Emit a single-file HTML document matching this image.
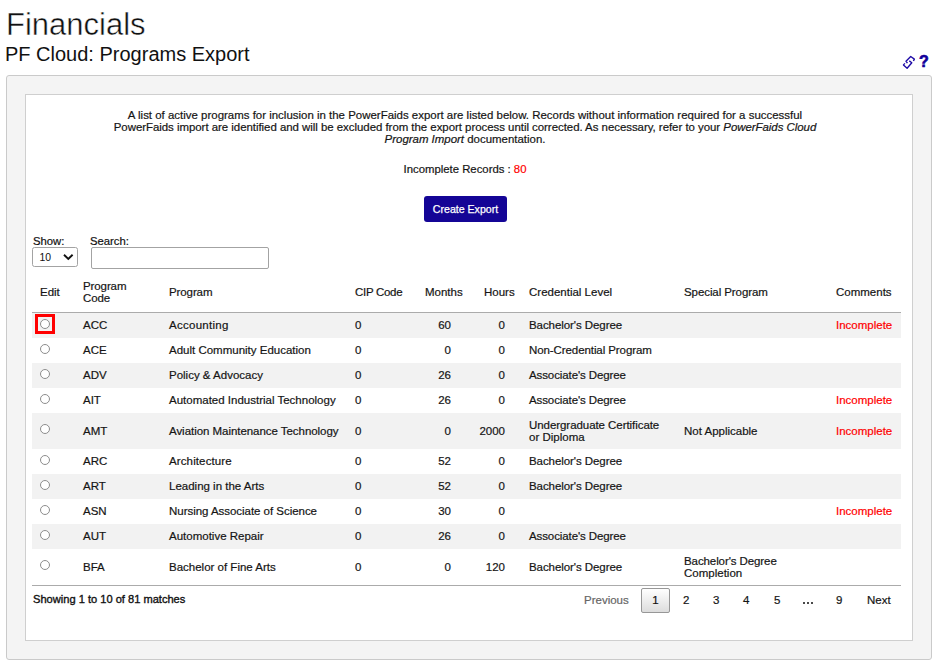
<!DOCTYPE html>
<html><head><meta charset="utf-8">
<style>
*{box-sizing:border-box}
html,body{margin:0;padding:0;background:#fff;width:936px;height:665px;overflow:hidden;position:relative}
body{font-family:"Liberation Sans",sans-serif;color:#111;font-size:11.5px}
.tb td,.tb th,#intro,#rec,#show,#search,#info,.pg{-webkit-text-stroke:0.2px currentColor}
.a{position:absolute;white-space:nowrap}
#h1{left:6px;top:8px;font-size:31px;line-height:34px;color:#111;-webkit-text-stroke:0.45px #fff}
#h2{left:5px;top:43px;font-size:20px;line-height:22px;color:#111}
#outer{left:6px;top:75px;width:926px;height:585px;border:1px solid #cacaca;border-radius:3px;background:#f4f4f4}
#inner{left:25px;top:94px;width:888px;height:547px;border:1px solid #cfcfcf;background:#fff}
#intro{left:0;width:930px;top:109px;text-align:center;font-size:11.45px;line-height:12px;color:#151515}
#rec{left:0;width:930px;top:163px;text-align:center;color:#151515;font-size:11.35px}
#rec span{color:#ff0000}
#btn{left:424px;top:196px;width:83px;height:26px;background:#140596;border-radius:3px;color:#fff;text-align:center;line-height:26px;font-size:10.6px;-webkit-text-stroke:0.25px #fff}
#show{left:33px;top:235px;font-size:11.3px}
#search{left:90px;top:235px;font-size:11.3px}
#sel{left:32px;top:247px;width:46px;height:20px;border:1px solid #a3a3a3;border-radius:2.5px;background:#fff}
#sel span{position:absolute;left:6.5px;top:4px;font-size:10.4px;color:#111}
#inp{left:91px;top:247px;width:178px;height:22px;border:1px solid #a3a3a3;border-radius:2px;background:#fff}
table{position:absolute;left:32px;top:273px;width:869px;border-collapse:separate;border-spacing:0;table-layout:fixed}
th{font-weight:normal;text-align:left;padding:0 0 2px 8px;height:40px;vertical-align:middle;line-height:12px;border-bottom:1px solid #ababab;color:#151515}
td{padding:0 0 1px 8px;height:25px;vertical-align:middle;line-height:12px;color:#151515}
tbody tr:nth-child(odd) td{background:#f2f2f2}
tr.t td{height:36px}
td.r{text-align:right;padding-left:0}
tbody tr:last-child td{border-bottom:1px solid #ababab;height:37px}
.inc{color:#ff0000}
.radio{display:inline-block;width:10px;height:10px;border:1px solid #8d8d8d;border-radius:50%;background:#fff;vertical-align:middle;position:relative;top:-2px;margin-left:0}
#hl{left:35px;top:314px;width:20px;height:20px;border:3px solid #ff0000}
#info{left:33px;top:593px;font-size:11.1px;-webkit-text-stroke:0.35px currentColor !important}
.pg{position:absolute;top:588px;height:24px;line-height:24px;color:#151515;font-size:11.5px}
#cur{-webkit-text-stroke:0.2px currentColor;left:641px;top:588px;width:29px;height:25px;border:1px solid #979797;border-radius:2px;background:linear-gradient(#fff,#dcdcdc);text-align:center;line-height:22px}
</style></head><body>
<div class="a" id="h1">Financials</div>
<div class="a" id="h2">PF Cloud: Programs Export</div>
<svg class="a" style="left:898px;top:50px" width="34" height="22" viewBox="0 0 34 22"><g fill="none" stroke="#1d0aa6" stroke-width="1.35" stroke-linejoin="round" stroke-linecap="butt"><path d="M15.45 11 L16.36 9.1 L12.73 6.55 L8.0 11.27 L9.45 13.1"/><path d="M11.3 10.9 L13.8 12.7 L9.1 18.2 L5.45 14.9 L6.9 13.4"/></g></svg>
<div class="a" id="q" style="left:919px;top:53px;font-size:16px;line-height:18px;font-weight:bold;color:#12009a;-webkit-text-stroke:0.6px #12009a">?</div>
<div class="a" id="outer"></div>
<div class="a" id="inner"></div>
<div class="a" id="intro"><span style="letter-spacing:0.008px">A list of active programs for inclusion in the PowerFaids export are listed below. Records without information required for a successful</span><br><span style="letter-spacing:-0.03px">PowerFaids import are identified and will be excluded from the export process until corrected. As necessary, refer to your <i>PowerFaids Cloud</i></span><br><i>Program Import</i> documentation.</div>
<div class="a" id="rec">Incomplete Records : <span>80</span></div>
<div class="a" id="btn">Create Export</div>
<div class="a" id="show">Show:</div>
<div class="a" id="search">Search:</div>
<div class="a" id="sel"><span>10</span><svg style="position:absolute;left:30px;top:6px" width="11" height="7" viewBox="0 0 11 7"><path d="M1 0.8 L5.3 5 L9.6 0.8" fill="none" stroke="#111" stroke-width="1.9"/></svg></div>
<div class="a" id="inp"></div>
<table class="tb">
<colgroup><col style="width:43px"><col style="width:86px"><col style="width:186px"><col style="width:70px"><col style="width:59px"><col style="width:45px"><col style="width:155px"><col style="width:152px"><col style="width:73px"></colgroup>
<thead><tr><th>Edit</th><th style="letter-spacing:-0.1px">Program<br>Code</th><th style="letter-spacing:-0.1px">Program</th><th style="letter-spacing:-0.3px">CIP Code</th><th>Months</th><th>Hours</th><th>Credential Level</th><th style="letter-spacing:-0.08px">Special Program</th><th>Comments</th></tr></thead>
<tbody>
<tr><td><span class="radio"></span></td><td>ACC</td><td style="letter-spacing:0.27px">Accounting</td><td>0</td><td class="r" style="padding-right:25px">60</td><td class="r" style="padding-right:16px">0</td><td style="letter-spacing:-0.07px">Bachelor's Degree</td><td></td><td class="inc">Incomplete</td></tr>
<tr><td><span class="radio"></span></td><td>ACE</td><td>Adult Community Education</td><td>0</td><td class="r" style="padding-right:25px">0</td><td class="r" style="padding-right:16px">0</td><td style="letter-spacing:-0.085px">Non-Credential Program</td><td></td><td></td></tr>
<tr><td><span class="radio"></span></td><td>ADV</td><td>Policy &amp; Advocacy</td><td>0</td><td class="r" style="padding-right:25px">26</td><td class="r" style="padding-right:16px">0</td><td style="letter-spacing:-0.1px">Associate's Degree</td><td></td><td></td></tr>
<tr><td><span class="radio"></span></td><td>AIT</td><td>Automated Industrial Technology</td><td>0</td><td class="r" style="padding-right:25px">26</td><td class="r" style="padding-right:16px">0</td><td style="letter-spacing:-0.1px">Associate's Degree</td><td></td><td class="inc">Incomplete</td></tr>
<tr class="t"><td><span class="radio"></span></td><td>AMT</td><td style="letter-spacing:-0.045px">Aviation Maintenance Technology</td><td>0</td><td class="r" style="padding-right:25px">0</td><td class="r" style="padding-right:16px">2000</td><td><span style="letter-spacing:-0.06px">Undergraduate Certificate</span><br>or Diploma</td><td>Not Applicable</td><td class="inc">Incomplete</td></tr>
<tr><td><span class="radio"></span></td><td>ARC</td><td style="letter-spacing:0.12px">Architecture</td><td>0</td><td class="r" style="padding-right:25px">52</td><td class="r" style="padding-right:16px">0</td><td style="letter-spacing:-0.07px">Bachelor's Degree</td><td></td><td></td></tr>
<tr><td><span class="radio"></span></td><td>ART</td><td>Leading in the Arts</td><td>0</td><td class="r" style="padding-right:25px">52</td><td class="r" style="padding-right:16px">0</td><td style="letter-spacing:-0.07px">Bachelor's Degree</td><td></td><td></td></tr>
<tr><td><span class="radio"></span></td><td>ASN</td><td style="letter-spacing:-0.035px">Nursing Associate of Science</td><td>0</td><td class="r" style="padding-right:25px">30</td><td class="r" style="padding-right:16px">0</td><td></td><td></td><td class="inc">Incomplete</td></tr>
<tr><td><span class="radio"></span></td><td>AUT</td><td>Automotive Repair</td><td>0</td><td class="r" style="padding-right:25px">26</td><td class="r" style="padding-right:16px">0</td><td style="letter-spacing:-0.1px">Associate's Degree</td><td></td><td></td></tr>
<tr class="t"><td><span class="radio"></span></td><td>BFA</td><td>Bachelor of Fine Arts</td><td>0</td><td class="r" style="padding-right:25px">0</td><td class="r" style="padding-right:16px">120</td><td style="letter-spacing:-0.07px">Bachelor's Degree</td><td><span style="letter-spacing:-0.09px">Bachelor's Degree</span><br>Completion</td><td></td></tr>
</tbody></table>
<div class="a" id="hl"></div>
<div class="a" id="info">Showing 1 to 10 of 81 matches</div>
<div class="pg" style="left:584px;color:#666">Previous</div>
<div class="a" id="cur">1</div>
<div class="pg" style="left:683px">2</div>
<div class="pg" style="left:713px">3</div>
<div class="pg" style="left:743px">4</div>
<div class="pg" style="left:774px">5</div>
<div class="a" style="left:803px;top:602px;width:2px;height:2px;background:#4a4a4a"></div><div class="a" style="left:807px;top:602px;width:2px;height:2px;background:#4a4a4a"></div><div class="a" style="left:811px;top:602px;width:2px;height:2px;background:#4a4a4a"></div>
<div class="pg" style="left:836px">9</div>
<div class="pg" style="left:867px">Next</div>
</body></html>
